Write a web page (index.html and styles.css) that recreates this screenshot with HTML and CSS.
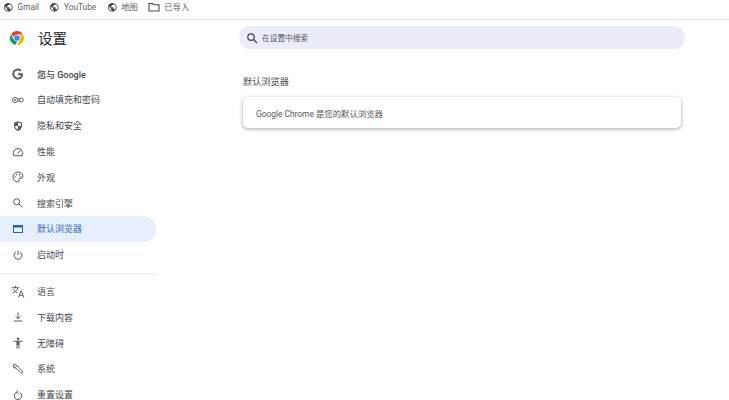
FILE: index.html
```html
<!DOCTYPE html>
<html lang="zh-CN">
<head>
<meta charset="utf-8">
<title>设置</title>
<link rel="stylesheet" href="styles.css">
</head>
<body>
<svg class="defs" width="0" height="0" aria-hidden="true">
  <symbol id="globe" viewBox="0 0 24 24"><path fill="currentColor" d="M12 2a10 10 0 1 0 0 20 10 10 0 0 0 0-20zm-1 17.900A8 8 0 0 1 4.200 10.200L9 15v1a2 2 0 0 0 2 2zm6.900-2.500A2 2 0 0 0 16 16h-1v-3a1 1 0 0 0-1-1H8v-2h2a1 1 0 0 0 1-1V7h2a2 2 0 0 0 2-2v-.4a8 8 0 0 1 2.900 12.800z"/></symbol>
</svg>
<header class="bookmarks">
  <a class="bm"><svg class="bm-icon"><use href="#globe"/></svg>Gmail</a>
  <a class="bm"><svg class="bm-icon"><use href="#globe"/></svg>YouTube</a>
  <a class="bm"><svg class="bm-icon"><use href="#globe"/></svg>地图</a>
  <a class="bm bm-folder"><svg class="bm-icon" viewBox="0 0 24 24"><path fill="none" stroke="currentColor" stroke-width="2.200" d="M2 5h7l2.500 2.500H22V20H2z"/></svg>已导入</a>
</header>
<div class="app">
  <aside class="sidebar">
    <div class="brand">
      <svg class="logo" viewBox="0 0 48 48">
        <path fill="#db4437" d="M24 3a21 21 0 0 1 18.200 10.500H24a10.500 10.500 0 0 0-10.100 7.600L6.200 12.900A21 21 0 0 1 24 3z"/>
        <path fill="#0f9d58" d="M5.600 13.700l9.200 15.800a10.500 10.500 0 0 0 10.400 5L18.200 45A21 21 0 0 1 5.600 13.700z"/>
        <path fill="#f4b400" d="M43.200 15.500H31.300a10.500 10.500 0 0 1 2 13.500L24.200 45A21 21 0 0 0 43.200 15.500z"/>
        <circle cx="24" cy="24" r="8.500" fill="#4285f4"/>
      </svg>
      <h1 class="brand-title">设置</h1>
    </div>
    <nav class="nav">
      <a class="nav-item nav-google"><svg class="nav-icon" viewBox="0 0 24 24"><path fill="none" stroke="currentColor" stroke-width="3.600" d="M21 12.500h-9m8.500 0a9 9 0 1 1-2.800-7"/></svg><span>您与 Google</span></a>
      <a class="nav-item"><svg class="nav-icon" viewBox="0 0 24 24"><g fill="none" stroke="currentColor" stroke-width="1.800"><circle cx="6" cy="12" r="5.200"/><circle cx="6" cy="12" r="1.400"/><path d="M11 9.800h6M11 14.500h6"/><circle cx="19" cy="12.200" r="3.800"/></g></svg><span>自动填充和密码</span></a>
      <a class="nav-item"><svg class="nav-icon" viewBox="0 0 24 24"><path fill="currentColor" fill-rule="evenodd" d="M12 2.500l8 3v6c0 5-3.400 9-8 10.500-4.600-1.500-8-5.500-8-10.500v-6zm0 2.300V12H6.100c.4 3.300 2.800 6.200 5.900 7.400V12h5.900V7z"/></svg><span>隐私和安全</span></a>
      <a class="nav-item"><svg class="nav-icon" viewBox="0 0 24 24"><g fill="none" stroke="currentColor" stroke-width="2"><path d="M3.800 19.500A9.500 9.500 0 1 1 20.200 19.500z" stroke-linejoin="round"/><path d="M10.500 15l6-5.500"/></g></svg><span>性能</span></a>
      <a class="nav-item"><svg class="nav-icon" viewBox="0 0 24 24"><path fill="none" stroke="currentColor" stroke-width="2" d="M12 2a10 10 0 0 0 0 20c1.500 0 2.500-1 2.500-2.200 0-1.500-1.200-1.600-1.200-3 0-1.100 1-2 2-2h2.200c2.700 0 4.500-1.800 4.500-4C22 5.500 17.500 2 12 2z"/><g fill="currentColor"><circle cx="6.500" cy="12" r="1.500"/><circle cx="9" cy="7.500" r="1.500"/><circle cx="15" cy="7.500" r="1.500"/><circle cx="17.500" cy="11.500" r="1.500"/></g></svg><span>外观</span></a>
      <a class="nav-item"><svg class="nav-icon" viewBox="0 0 24 24"><g fill="none" stroke="currentColor" stroke-width="2"><circle cx="9.500" cy="9.500" r="6"/><path d="M14 14l7 7"/></g></svg><span>搜索引擎</span></a>
      <a class="nav-item nav-active"><svg class="nav-icon" viewBox="0 0 24 24"><path fill="currentColor" fill-rule="evenodd" d="M2 4h20v16H2zm2 5v9h16V9z"/></svg><span>默认浏览器</span></a>
      <a class="nav-item"><svg class="nav-icon" viewBox="0 0 24 24"><g fill="none" stroke="currentColor" stroke-width="2"><path d="M12 3v9"/><path d="M8 5.500a8 8 0 1 0 8 0"/></g></svg><span>启动时</span></a>
      <hr class="nav-sep">
      <a class="nav-item"><svg class="nav-icon nav-icon-lang" viewBox="0 0 24 24"><g fill="none" stroke="currentColor" stroke-width="1.800"><path d="M0 5h13M6.500 1.500V5M11 5c-1 4-4 7.500-9.500 9.500M3 7.500c1.200 3 3.500 5.500 7 7"/><path d="M12 23l5-12.500L22 23M13.800 19h6.400"/></g></svg><span>语言</span></a>
      <a class="nav-item"><svg class="nav-icon" viewBox="0 0 24 24"><g fill="none" stroke="currentColor" stroke-width="2"><path d="M12 3v12M7.500 11l4.500 4.500 4.500-4.500M3.500 20h17"/></g></svg><span>下载内容</span></a>
      <a class="nav-item"><svg class="nav-icon" viewBox="0 0 24 24"><circle cx="12" cy="3.500" r="2.500" fill="currentColor"/><path fill="currentColor" d="M3 7.500h18v2.200h-6V23h-2v-7h-2v7H9V9.700H3z"/></svg><span>无障碍</span></a>
      <a class="nav-item"><svg class="nav-icon" viewBox="0 0 24 24"><path fill="none" stroke="currentColor" stroke-width="1.900" stroke-linejoin="round" d="M7 2.500L4 3 3 6.500l3 3-2 .5C2.500 8 2 5 4 3M7 2.500l2.500 3-3 3M9.500 5.500c2-.5 3.500 1 3.500 3l8 8c.8 1 .8 2 0 3s-2 1.200-3 .3l-8-8c-2 0-3.500-1-4-3.300"/></svg><span>系统</span></a>
      <a class="nav-item"><svg class="nav-icon" viewBox="0 0 24 24"><g fill="none" stroke="currentColor" stroke-width="2"><path d="M8.500 7a7.500 7.500 0 1 0 7 0"/><path d="M12 2.500L8.500 7l4.500 1.500" stroke-linejoin="round"/></g></svg><span>重置设置</span></a>
    </nav>
  </aside>
  <main class="content">
    <div class="search">
      <svg class="search-icon" viewBox="0 0 24 24"><g fill="none" stroke="currentColor" stroke-width="2.500"><circle cx="10" cy="10" r="6.500"/><path d="M15 15l7 7"/></g></svg>
      <span class="search-text">在设置中搜索</span>
    </div>
    <h2 class="section-title">默认浏览器</h2>
    <section class="card">Google Chrome 是您的默认浏览器</section>
  </main>
</div>
</body>
</html>
```
FILE: styles.css
```css
* { box-sizing: border-box; }
html, body { margin: 0; height: 100%; overflow: hidden; background: #fff; }
body {
  font-family: "Roboto", "Noto Sans CJK SC", sans-serif;
  color: #46484c;
}
.defs { position: absolute; }
.bookmarks {
  height: 20px;
  display: flex;
  align-items: flex-start;
  padding: 1px 0 0 3px;
  gap: 10.500px;
  border-bottom: 1px solid #e6e6e6;
  font-size: 8.300px;
  line-height: 12px;
  color: #5f6165;
}
.bm { display: flex; align-items: center; gap: 4px; }
.bm-icon { width: 10.500px; height: 10.500px; color: #45484c; }
.bm-folder .bm-icon { width: 12px; height: 12px; }
.app { display: flex; }
.sidebar { width: 156px; flex: none; }
.brand { display: flex; align-items: center; height: 36px; padding-left: 9px; gap: 13px; }
.logo { width: 16px; height: 16px; }
.brand-title { margin: 0 0 1px; font-size: 14.500px; font-weight: 400; color: #2a2b2e; }
.nav { display: flex; flex-direction: column; margin-top: 5.300px; }
.nav-item {
  display: flex;
  align-items: center;
  height: 25.800px;
  padding-left: 12px;
  gap: 13px;
  font-size: 9px;
  border-radius: 0 13px 13px 0;
}
.nav-icon { width: 12px; height: 12px; flex: none; color: #55585c; }
.nav-icon-lang { width: 13px; height: 13px; margin-right: -1px; }
.nav-google { font-weight: 500; }
.nav-active { background: #e6effb; color: #2f68c4; }
.nav-active .nav-icon { color: #2a5fb8; }
.nav-sep { width: 100%; margin: 5px 0; border: 0; border-top: 1px solid #ececec; }
.content { flex: 1; padding: 6px 0 0 83px; }
.search {
  width: 446px;
  height: 23px;
  background: #eaedf7;
  border-radius: 12px;
  display: flex;
  align-items: center;
  padding-left: 7px;
  gap: 4px;
  font-size: 7.700px;
  color: #55585c;
}
.search-icon { width: 12px; height: 12px; color: #44474b; }
.section-title { margin: 26px 0 8px 4px; font-size: 9.200px; line-height: 14px; font-weight: 400; color: #4a4c50; }
.card {
  width: 438px;
  height: 31px;
  margin-left: 4px;
  padding-left: 13px;
  display: flex;
  align-items: center;
  font-size: 8.400px;
  color: #55585c;
  background: #fff;
  border-radius: 5px;
  box-shadow: 0 1px 3px 1px rgba(60,64,67,.3);
}
```
